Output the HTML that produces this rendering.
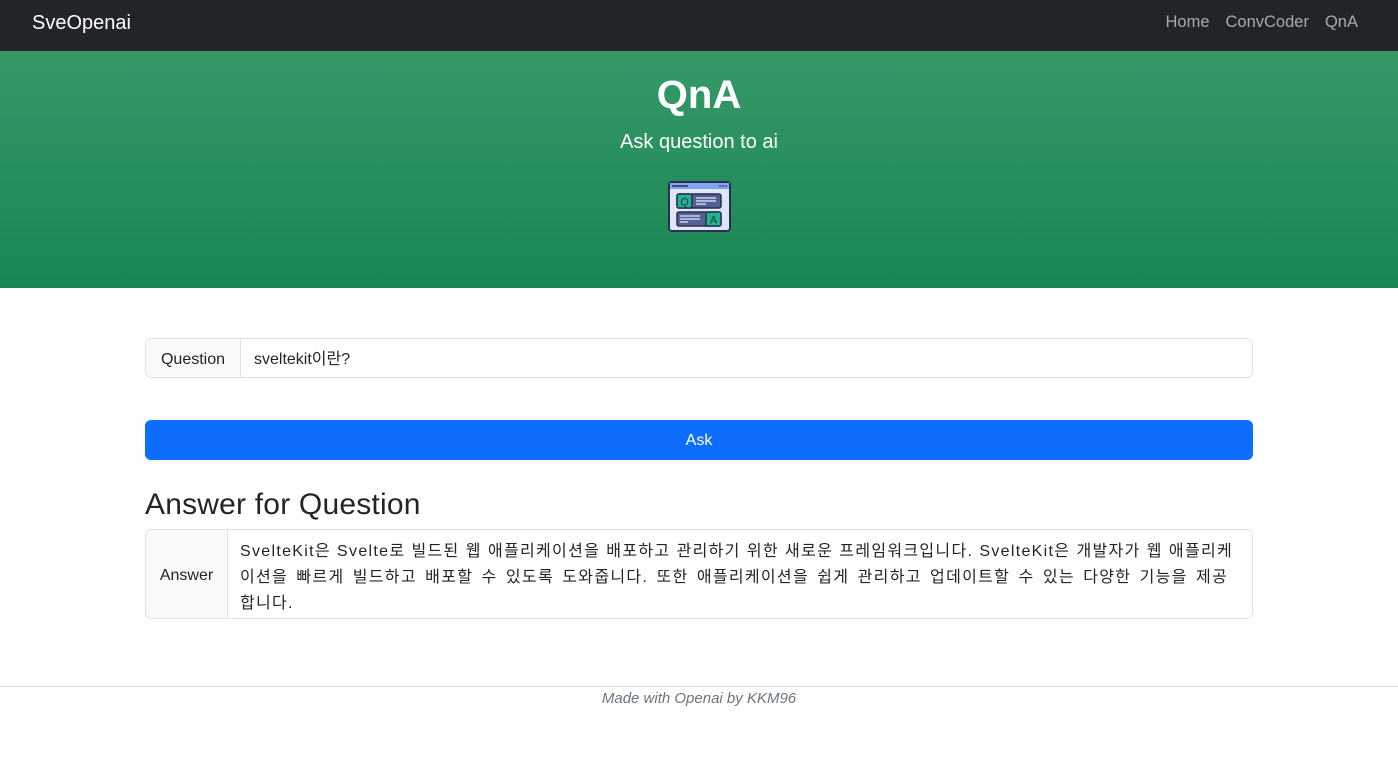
<!DOCTYPE html>
<html><head><meta charset="utf-8">
<style>
*{box-sizing:border-box;margin:0;padding:0}
body{width:1398px;height:776px;background:#fff;font-family:"Liberation Sans","Noto Sans CJK KR",sans-serif;color:#212529;overflow:hidden;position:relative}
nav{height:51px;background:#212529;position:relative}
.brand{position:absolute;left:32px;top:12px;color:#fff;font-size:20px}
.links{position:absolute;right:40px;top:13px;font-size:16.5px;color:rgba(255,255,255,.6)}
.links span{margin-left:16px}
.hero{height:237px;background:linear-gradient(#379868,#198754);text-align:center;color:#fff;position:relative}
.hero h1{position:absolute;top:22px;width:100%;font-size:40px;font-weight:bold}
.hero p{position:absolute;top:80px;width:100%;font-size:20px}
.icon{position:absolute;left:668px;top:130px}
.grp{position:absolute;left:145px;width:1108px;border:1px solid #dee2e6;border-radius:6px;display:flex;overflow:hidden;font-size:16px}
.lab{background:#f8f9fa;border-right:1px solid #dee2e6;display:flex;align-items:center;justify-content:center;padding-top:3px}
.btn{position:absolute;left:145px;top:420px;width:1108px;height:40px;background:#0d6efd;border-radius:6px;color:#fff;text-align:center;line-height:42px;font-size:16px}
h2{position:absolute;left:145px;top:488px;font-size:30px;font-weight:normal;letter-spacing:.2px}
.ans span{display:block;white-space:nowrap;line-height:26px;letter-spacing:1.3px}
.ans span.j{width:993px;text-align:justify;text-align-last:justify}
footer{position:absolute;top:686px;left:0;width:1398px;border-top:1px solid #dee2e6;text-align:center;color:#6c757d;font-style:italic;font-size:15px;padding-top:3px}
</style></head><body>
<nav><div class="brand">SveOpenai</div><div class="links"><span>Home</span><span>ConvCoder</span><span>QnA</span></div></nav>
<div class="hero"><h1>QnA</h1><p>Ask question to ai</p>
<svg class="icon" width="63" height="52" viewBox="0 0 63 52">
<rect x="1" y="1" width="61" height="49" rx="3" fill="#dfe6f7" stroke="#2b2f55" stroke-width="2"/>
<rect x="2" y="2" width="59" height="6" fill="#7ea6ee"/>
<line x1="4" y1="5" x2="20" y2="5" stroke="#2b2f55" stroke-width="1.5"/>
<circle cx="52" cy="5" r=".9" fill="#2b2f55"/><circle cx="55" cy="5" r=".9" fill="#2b2f55"/><circle cx="58" cy="5" r=".9" fill="#2b2f55"/>
<rect x="9" y="13" width="44" height="14" rx="2" fill="#52618f" stroke="#2b2f55" stroke-width="1.5"/>
<rect x="9" y="13" width="15" height="14" rx="2" fill="#1fb58a" stroke="#2b2f55" stroke-width="1.5"/>
<text x="16.5" y="24.5" font-size="11" text-anchor="middle" fill="#2b2f55" font-family="Liberation Sans">Q</text>
<line x1="28" y1="17" x2="48" y2="17" stroke="#c9d3ee" stroke-width="1.5"/><line x1="28" y1="20" x2="48" y2="20" stroke="#c9d3ee" stroke-width="1.5"/><line x1="28" y1="23" x2="38" y2="23" stroke="#c9d3ee" stroke-width="1.5"/>
<rect x="9" y="31" width="44" height="14" rx="2" fill="#52618f" stroke="#2b2f55" stroke-width="1.5"/>
<rect x="38" y="31" width="15" height="14" rx="2" fill="#1fb58a" stroke="#2b2f55" stroke-width="1.5"/>
<text x="45.5" y="42.5" font-size="11" text-anchor="middle" fill="#2b2f55" font-family="Liberation Sans">A</text>
<line x1="12" y1="35" x2="32" y2="35" stroke="#c9d3ee" stroke-width="1.5"/><line x1="12" y1="38" x2="32" y2="38" stroke="#c9d3ee" stroke-width="1.5"/><line x1="12" y1="41" x2="20" y2="41" stroke="#c9d3ee" stroke-width="1.5"/>
</svg></div>
<div class="grp" style="top:338px;height:40px"><div class="lab" style="width:95px">Question</div><div style="padding-left:13px;line-height:42px">sveltekit이란?</div></div>
<div class="btn">Ask</div>
<h2>Answer for Question</h2>
<div class="grp" style="top:529px;height:90px"><div class="lab" style="width:82px">Answer</div><div class="ans" style="padding:9px 0 0 12px"><span class="j">SvelteKit은 Svelte로 빌드된 웹 애플리케이션을 배포하고 관리하기 위한 새로운 프레임워크입니다. SvelteKit은 개발자가 웹 애플리케</span><span class="j" style="width:988px">이션을 빠르게 빌드하고 배포할 수 있도록 도와줍니다. 또한 애플리케이션을 쉽게 관리하고 업데이트할 수 있는 다양한 기능을 제공</span><span>합니다.</span></div></div>
<footer>Made with Openai by KKM96</footer>
</body></html>
